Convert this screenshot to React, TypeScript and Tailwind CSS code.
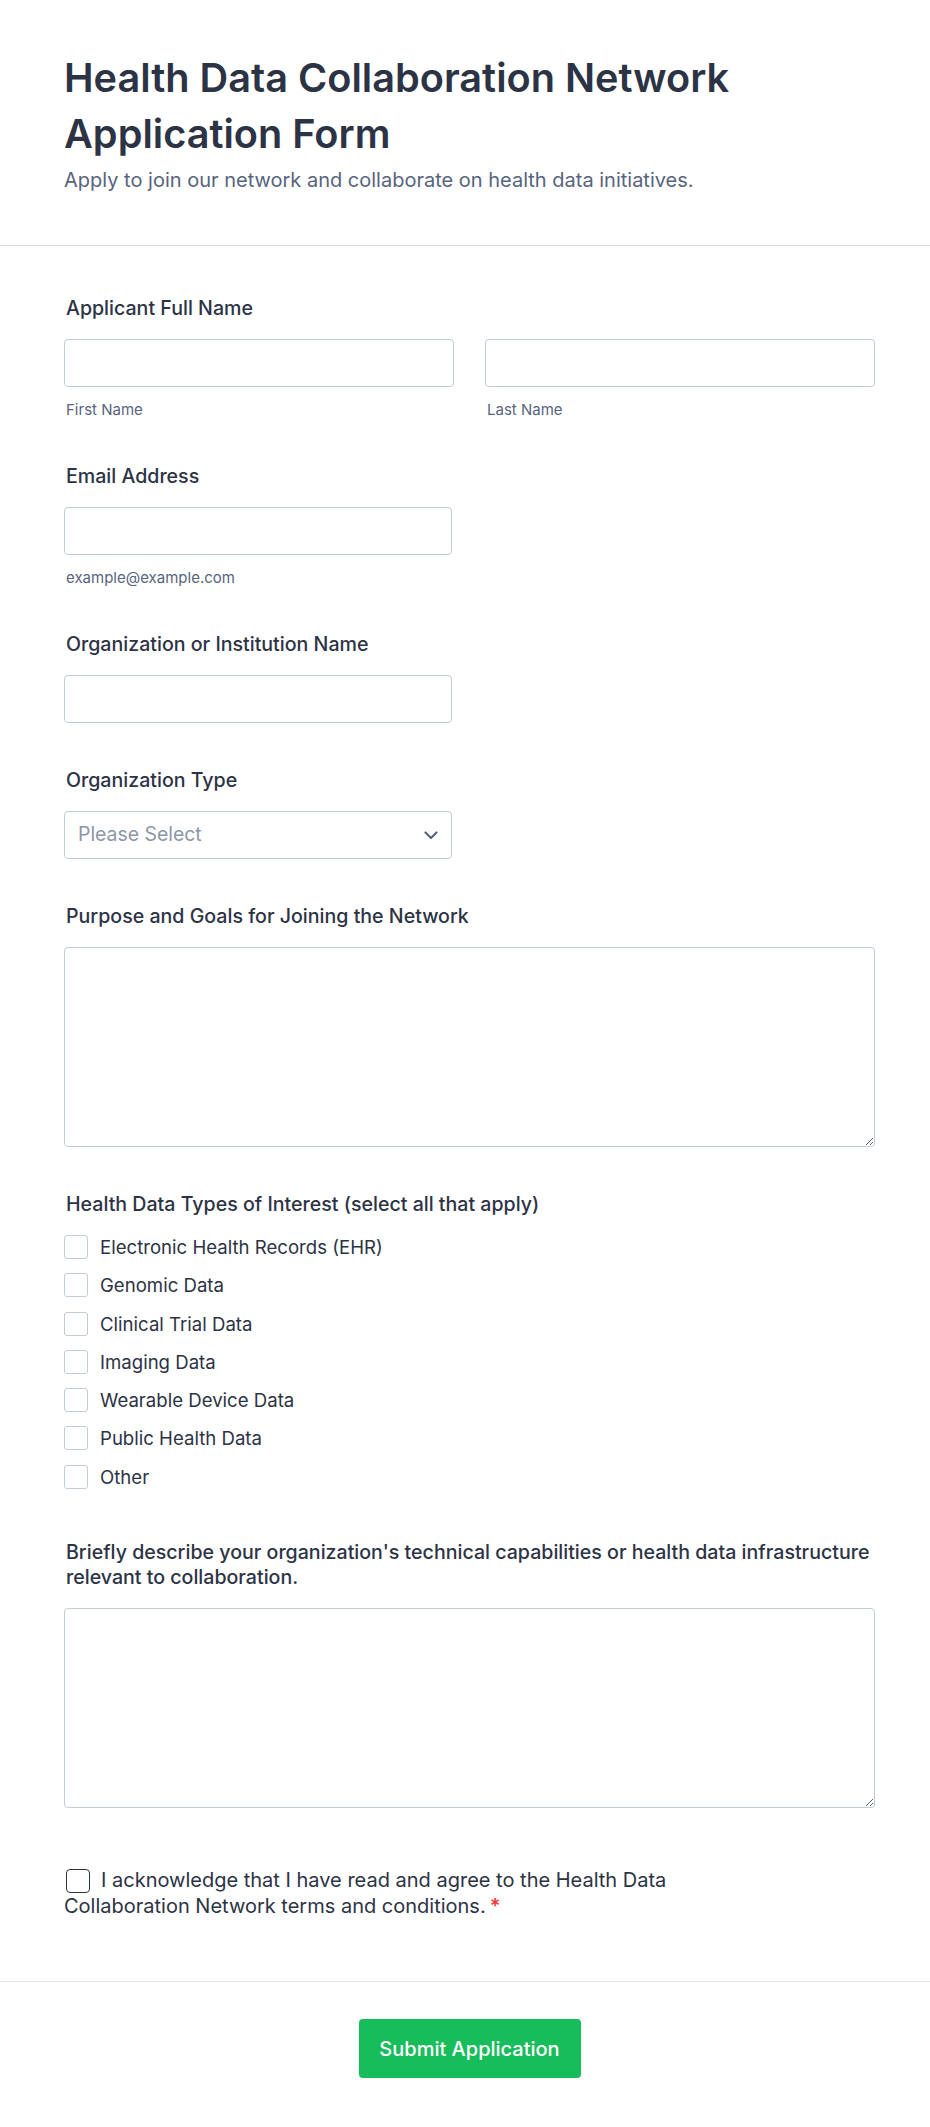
import React from 'react';

const checkboxOptions = [
  'Electronic Health Records (EHR)',
  'Genomic Data',
  'Clinical Trial Data',
  'Imaging Data',
  'Wearable Device Data',
  'Public Health Data',
  'Other',
];

const FieldLabel = ({ children }: { children: React.ReactNode }) => (
  <label className="block pl-[2px] mb-[18px] text-[19.6px] leading-[25px] font-medium text-[#2c3345]">
    {children}
  </label>
);

const SubLabel = ({ children }: { children: React.ReactNode }) => (
  <p className="mt-[13px] pl-[2px] text-[15px] leading-[20px] text-[#57647e]">{children}</p>
);

const TextInput = ({ className = '' }: { className?: string }) => (
  <input
    type="text"
    className={`block h-[48px] rounded-[4px] border border-[#c3cad8] bg-white px-3 text-[20px] text-[#2c3345] outline-none ${className}`}
  />
);

const App = () => {
  return (
    <div className="min-h-screen bg-white font-['Inter',sans-serif] text-[#2c3345]">
      <header className="border-b border-[#dedfe5] pl-[64px] pr-[55px] pt-[50px] pb-[51px]">
        <h1 className="text-[39.7px] leading-[56px] font-semibold text-[#2c3345]">
          Health Data Collaboration Network
          <br />
          Application Form
        </h1>
        <p className="mt-[4px] text-[20px] leading-[28px] text-[#57647e]">
          Apply to join our network and collaborate on health data initiatives.
        </p>
      </header>

      <main className="pl-[64px] pr-[55px] pt-[28px]">
        <div className="pt-[22px] pb-[22px]">
          <FieldLabel>Applicant Full Name</FieldLabel>
          <div className="grid grid-cols-2 gap-x-[31px]">
            <div>
              <TextInput className="w-full" />
              <SubLabel>First Name</SubLabel>
            </div>
            <div>
              <TextInput className="w-full" />
              <SubLabel>Last Name</SubLabel>
            </div>
          </div>
        </div>

        <div className="pt-[22px] pb-[22px]">
          <FieldLabel>Email Address</FieldLabel>
          <TextInput className="w-[388px]" />
          <SubLabel>example@example.com</SubLabel>
        </div>

        <div className="pt-[22px] pb-[23px]">
          <FieldLabel>Organization or Institution Name</FieldLabel>
          <TextInput className="w-[388px]" />
        </div>

        <div className="pt-[22px] pb-[23px]">
          <FieldLabel>Organization Type</FieldLabel>
          <div className="flex h-[48px] w-[388px] items-center justify-between rounded-[4px] border border-[#c3cad8] bg-white pl-[13px] pr-[13px]">
            <span className="text-[19.4px] text-[#8d96a8]">Please Select</span>
            <svg width="14" height="9" viewBox="0 0 14 9" fill="none">
              <path d="M1.5 1.5L7 7L12.5 1.5" stroke="#57647e" strokeWidth="2.2" strokeLinecap="round" strokeLinejoin="round" />
            </svg>
          </div>
        </div>

        <div className="pt-[22px] pb-[23px]">
          <FieldLabel>Purpose and Goals for Joining the Network</FieldLabel>
          <textarea className="block h-[200px] w-full rounded-[4px] border border-[#c3cad8] bg-white p-3 text-[18px] outline-none" />
        </div>

        <div className="pt-[22px] pb-[23px]">
          <FieldLabel>Health Data Types of Interest (select all that apply)</FieldLabel>
          <div className="flex flex-col gap-[14.3px]">
            {checkboxOptions.map((opt) => (
              <label key={opt} className="flex h-[24px] items-center gap-[12px]">
                <span className="block h-[24px] w-[24px] shrink-0 rounded-[3px] border border-[#c3cad8] bg-white" />
                <span className="text-[18.6px] leading-[24px] text-[#2c3345]">{opt}</span>
              </label>
            ))}
          </div>
        </div>

        <div className="pt-[28px] pb-[23px]">
          <FieldLabel>
            Briefly describe your organization's technical capabilities or health data infrastructure relevant to
            collaboration.
          </FieldLabel>
          <textarea className="block h-[200px] w-full rounded-[4px] border border-[#c3cad8] bg-white p-3 text-[18px] outline-none" />
        </div>

        <div className="pt-[36px] pb-[61px]">
          <p className="max-w-[680px] text-[20px] leading-[26.7px] text-[#2c3345]">
            <span className="ml-[2px] mr-[11px] inline-block h-[24px] w-[24px] rounded-[4px] border-[1.7px] border-[#2c3345] bg-white align-[-6px]" />
            I acknowledge that I have read and agree to the Health Data Collaboration Network terms and conditions.
            <span className="ml-[4px] font-semibold text-[#f23a3c]">*</span>
          </p>
        </div>
      </main>

      <footer className="flex justify-center border-t border-[#e4e8f2] pt-[37px] pb-[50px] pl-[64px] pr-[55px]">
        <button className="h-[59px] w-[222px] rounded-[4px] bg-[#18bd5b] text-[20px] font-medium text-white">
          Submit Application
        </button>
      </footer>
    </div>
  );
};

export default App;
